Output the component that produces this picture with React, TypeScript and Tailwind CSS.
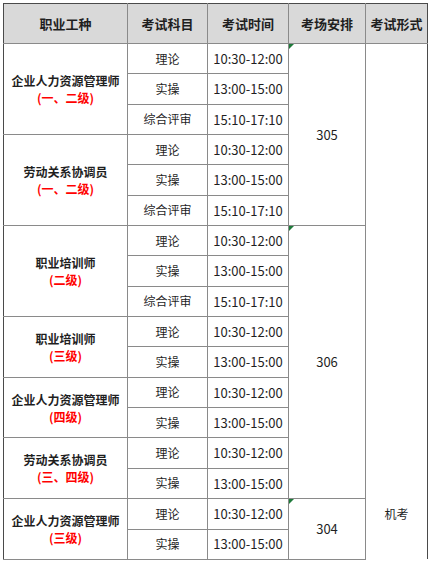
const groups = [
  { name: "企业人力资源管理师", level: "(一、二级)", rows: ["理论", "实操", "综合评审"], room: "305", roomSpan: 6 },
  { name: "劳动关系协调员", level: "(一、二级)", rows: ["理论", "实操", "综合评审"] },
  { name: "职业培训师", level: "(二级)", rows: ["理论", "实操", "综合评审"], room: "306", roomSpan: 9 },
  { name: "职业培训师", level: "(三级)", rows: ["理论", "实操"] },
  { name: "企业人力资源管理师", level: "(四级)", rows: ["理论", "实操"] },
  { name: "劳动关系协调员", level: "(三、四级)", rows: ["理论", "实操"] },
  { name: "企业人力资源管理师", level: "(三级)", rows: ["理论", "实操"], room: "304", roomSpan: 2 },
];

const times: Record<string, string> = {
  理论: "10:30-12:00",
  实操: "13:00-15:00",
  综合评审: "15:10-17:10",
};

const cell = "border border-[#8a8a8a] text-center p-0";

function Marker() {
  return (
    <span className="absolute left-0 top-0 w-0 h-0 border-t-[5px] border-t-[#1e7a3a] border-r-[5px] border-r-transparent" />
  );
}

export default function App() {
  const total = groups.reduce((n, g) => n + g.rows.length, 0);
  let first = true;

  return (
    <div className="min-h-[561px] bg-white pl-[3px] pt-[3px] overflow-hidden" style={{ fontFamily: '"Noto Sans CJK SC", "Noto Sans", sans-serif' }}>
      <table className="border-collapse table-fixed w-[424px] text-[#1f1f1f] text-[13px]">
        <colgroup>
          <col className="w-[124px]" />
          <col className="w-[80px]" />
          <col className="w-[81px]" />
          <col className="w-[77px]" />
          <col className="w-[62px]" />
        </colgroup>
        <thead>
          <tr className="h-[40px] bg-[#d9d9d9] text-[13px] font-bold">
            <th className={`${cell} align-middle border-l-[#4a4a4a] border-t-[#4a4a4a]`}>职业工种</th>
            <th className={`${cell} align-middle border-t-[#4a4a4a]`}>考试科目</th>
            <th className={`${cell} align-middle border-t-[#4a4a4a]`}>考试时间</th>
            <th className={`${cell} align-middle border-t-[#4a4a4a]`}>考场安排</th>
            <th className={`${cell} align-middle border-t-[#4a4a4a] border-r-[#4a4a4a]`}>考试形式</th>
          </tr>
        </thead>
        <tbody>
          {groups.map((g, gi) =>
            g.rows.map((r, ri) => {
              const isFirst = first;
              first = false;
              return (
                <tr key={`${gi}-${ri}`} className="h-[30.35px]">
                  {ri === 0 && (
                    <td rowSpan={g.rows.length} className={`${cell} align-middle border-l-[#4a4a4a] font-bold text-[12px] leading-[17px]`}>
                      <div>{g.name}</div>
                      <div className="text-[#ff0000]">{g.level}</div>
                    </td>
                  )}
                  <td className={`${cell} align-middle text-[12px]`}>{r}</td>
                  <td className={`${cell} align-middle`}>{times[r]}</td>
                  {ri === 0 && g.room && (
                    <td rowSpan={g.roomSpan} className={`${cell} align-middle relative`}>
                      <Marker />
                      {g.room}
                    </td>
                  )}
                  {isFirst && (
                    <td rowSpan={total} className={`${cell} border-r-[#4a4a4a] border-b-0 align-bottom pb-[36px] text-[12px]`}>
                      机考
                    </td>
                  )}
                </tr>
              );
            })
          )}
        </tbody>
      </table>
    </div>
  );
}
